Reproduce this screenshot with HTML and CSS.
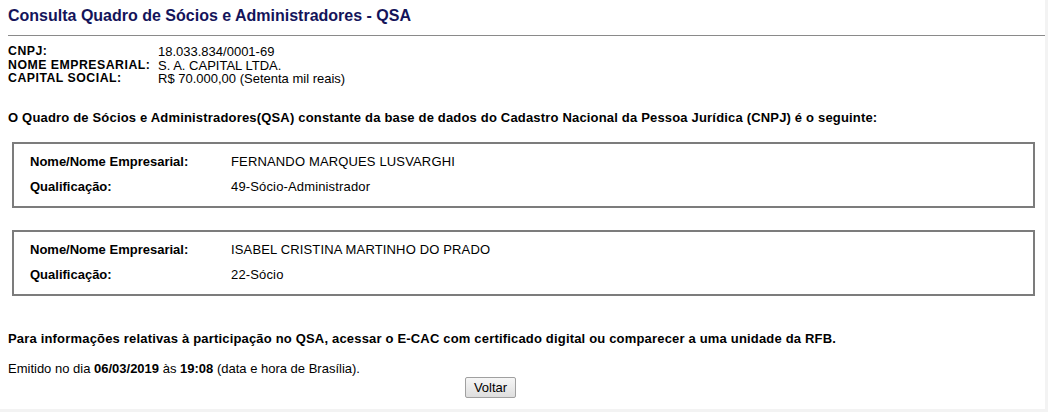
FILE: index.html
```html
<!DOCTYPE html>
<html lang="pt-BR">
<head>
  <meta charset="UTF-8" />
  <title>Consulta QSA</title>
  <link rel="stylesheet" href="styles.css">
</head>
<body>
  <div class="page">
    <h1 class="title">Consulta Quadro de Sócios e Administradores - QSA</h1>
    <hr class="rule" />

    <table class="info">
      <tr><th>CNPJ:</th><td>18.033.834/0001-69</td></tr>
      <tr><th>NOME EMPRESARIAL:</th><td>S. A. CAPITAL LTDA.</td></tr>
      <tr><th>CAPITAL SOCIAL:</th><td>R$ 70.000,00 (Setenta mil reais)</td></tr>
    </table>

    <p class="lead">O Quadro de Sócios e Administradores(QSA) constante da base de dados do Cadastro Nacional da Pessoa Jurídica (CNPJ) é o seguinte:</p>

    <div class="socio">
      <div class="row"><span class="label">Nome/Nome Empresarial:</span><span>FERNANDO MARQUES LUSVARGHI</span></div>
      <div class="row"><span class="label">Qualificação:</span><span>49-Sócio-Administrador</span></div>
    </div>

    <div class="socio">
      <div class="row"><span class="label">Nome/Nome Empresarial:</span><span>ISABEL CRISTINA MARTINHO DO PRADO</span></div>
      <div class="row"><span class="label">Qualificação:</span><span>22-Sócio</span></div>
    </div>

    <p class="lead note">Para informações relativas à participação no QSA, acessar o E-CAC com certificado digital ou comparecer a uma unidade da RFB.</p>

    <p class="emitido">Emitido no dia <b>06/03/2019</b> às <b>19:08</b> (data e hora de Brasília).</p>

    <div class="actions">
      <button type="button" class="btn">Voltar</button>
    </div>
  </div>
</body>
</html>
```

FILE: styles.css
```css
body {
  margin: 0;
  background: #f3f3f3;
  font-family: "Liberation Sans", Arial, sans-serif;
  color: #000;
}

.page {
  width: 1045px;
  height: 409px;
  box-sizing: border-box;
  background: #fff;
  padding: 6px 0 0 8px;
  overflow: hidden;
}

.title {
  margin: 0;
  font-size: 16px;
  line-height: 19px;
  color: #14145a;
}

.rule {
  margin: 10px 0 0 0;
  border: 0;
  border-top: 1px solid #8a8a8a;
}

.info {
  margin-top: 9px;
  border-collapse: collapse;
  font-size: 13px;
}

.info th,
.info td {
  padding: 0;
  line-height: 13.5px;
  text-align: left;
  vertical-align: top;
}

.info th {
  width: 150px;
  font-size: 12.3px;
  letter-spacing: 0.5px;
}

.lead {
  margin: 24px 0 0 0;
  font-size: 13px;
  font-weight: bold;
  line-height: 15px;
  letter-spacing: 0.18px;
}

.socio {
  margin: 17px 10px 0 4px;
  border: 2px solid #7c7c7c;
  padding: 5px 16px 7px;
  font-size: 13px;
}

.socio + .socio {
  margin-top: 22px;
}

.row {
  display: flex;
  line-height: 25px;
  letter-spacing: 0.15px;
}

.row .label {
  width: 201px;
  font-weight: bold;
  letter-spacing: 0;
}

.note {
  margin-top: 35px;
}

.emitido {
  margin: 15px 0 0 0;
  font-size: 13px;
  line-height: 15px;
}

.actions {
  padding-left: 457px;
  margin-top: 1px;
}

.btn {
  font-family: "Liberation Sans", Arial, sans-serif;
  font-size: 13px;
  height: 21px;
  width: 51px;
  padding: 0;
  border: 1px solid #a0a0a0;
  border-radius: 2px;
  background: linear-gradient(#f6f6f6, #dedede);
  color: #000;
}
```
